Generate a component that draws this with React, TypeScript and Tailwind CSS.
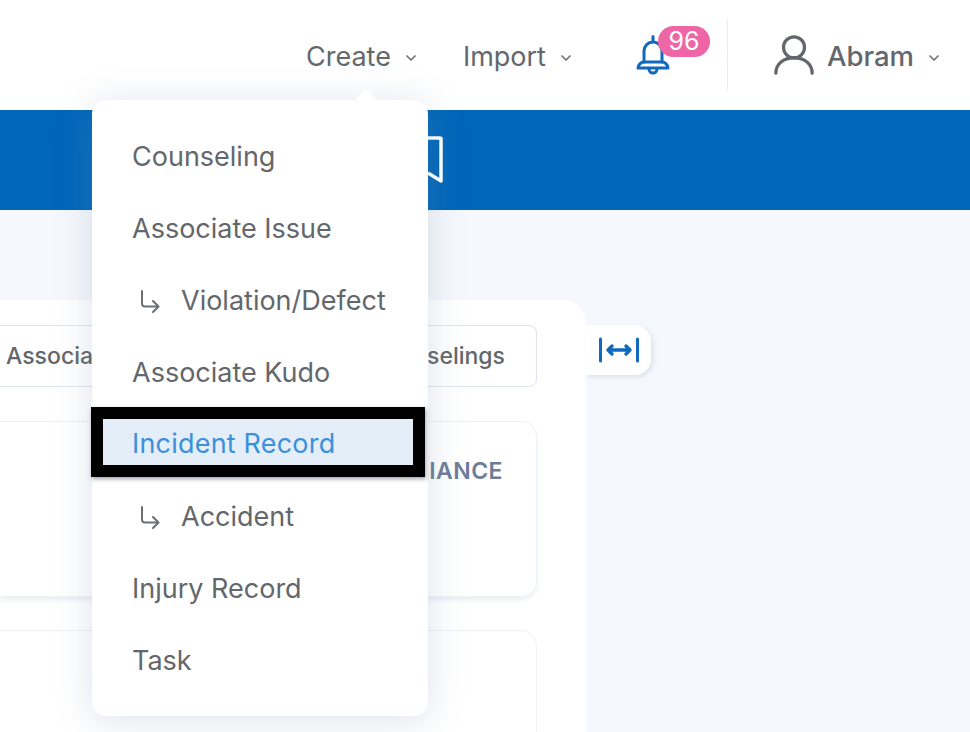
import { ChevronDown } from 'lucide-react';

const menuItems = [
  { label: 'Counseling' },
  { label: 'Associate Issue' },
  { label: 'Violation/Defect', child: true },
  { label: 'Associate Kudo' },
  { label: 'Incident Record', active: true },
  { label: 'Accident', child: true },
  { label: 'Injury Record' },
  { label: 'Task' },
];

function ChildArrow() {
  return (
    <svg width="22" height="24" viewBox="0 0 22 24" fill="none" stroke="#6b7075" strokeWidth="2" strokeLinecap="round" strokeLinejoin="round" className="mr-[20px]">
      <path d="M3 2v12.5a3 3 0 0 0 3 3h13" />
      <path d="M14 12l5.5 5.5L14 23" />
    </svg>
  );
}

function NavItem({ label }: { label: string }) {
  return (
    <div className="flex items-center gap-[12px] pt-[4px] text-[27px] text-[#63676c]">
      {label}
      <ChevronDown size={16} strokeWidth={2.5} className="mt-[2px] text-[#6b7075]" />
    </div>
  );
}

export default function App() {
  return (
    <div className="relative h-[732px] w-[970px] overflow-hidden bg-[#f5f8fc] font-['Inter',sans-serif]">
      {/* Top nav */}
      <header className="flex h-[110px] items-center justify-end bg-white pr-[28px]">
        <NavItem label="Create" />
        <div className="ml-[44px]">
          <NavItem label="Import" />
        </div>
        <div className="relative ml-[61px] h-[44px] w-[36px]">
          <svg width="36" height="42" viewBox="0 0 36 42" fill="none" stroke="#0f69bd" strokeWidth="3" strokeLinecap="round" strokeLinejoin="round" className="mt-[2px]">
            <path d="M18 1.5v4" />
            <path d="M9 27V16a9 9 0 0 1 18 0v11" />
            <path d="M3 33c0-3 3-6 6-6h18c3 0 6 3 6 6H3z" />
            <path d="M14 34a4 4 0 0 0 8 0" />
          </svg>
          <span className="absolute left-[23px] top-[-7px] flex h-[31px] w-[52px] items-center justify-center rounded-full bg-[#ee66a6] text-[25px] leading-none text-white">
            96
          </span>
        </div>
        <div className="ml-[56px] h-[72px] w-px bg-[#e6edf4]" />
        <svg width="42" height="42" viewBox="0 0 44 44" fill="none" stroke="#63676c" strokeWidth="3.4" strokeLinecap="round" className="ml-[45px]">
          <circle cx="22" cy="14" r="11" />
          <path d="M3 41c0-10 8-16 19-16s19 6 19 16" />
        </svg>
        <div className="ml-[12px]">
          <div className="flex items-center gap-[12px] pt-[4px] text-[27.5px] font-medium text-[#63676c]">
            Abram
            <ChevronDown size={16} strokeWidth={2.5} className="mt-[2px] text-[#6b7075]" />
          </div>
        </div>
      </header>

      {/* Blue bar */}
      <div className="flex h-[100px] items-center bg-[#0066b9] pl-[424px]">
        <svg width="20" height="50" viewBox="0 0 20 50" fill="none" stroke="white" strokeWidth="3.5" strokeLinejoin="round">
          <path d="M2 3h14a1 1 0 0 1 1 1v42L4 38" />
        </svg>
      </div>

      {/* Panel */}
      <div className="mt-[90px] flex items-start">
        <div className="h-[500px] w-[586px] rounded-tr-[22px] bg-white pr-[49px] pt-[25px]">
          <div className="flex h-[62px] items-center justify-between rounded-r-[8px] border border-l-0 border-[#dfe5ec] pl-[6px] pr-[31px] text-[23px] font-medium text-[#63676c]">
            <span>Associates</span>
            <span>Counselings</span>
          </div>
          <div className="mt-[34px] flex h-[176px] justify-end rounded-r-[16px] border border-l-0 border-[#eef2f7] pr-[33px] pt-[35px] shadow-[0_3px_4px_rgba(150,165,185,0.18)]">
            <span className="text-[23px] font-semibold leading-[28px] tracking-[0.02em] text-[#6c7d99]">COMPLIANCE</span>
          </div>
          <div className="mt-[33px] h-[200px] rounded-tr-[16px] border border-l-0 border-[#eef2f7] pl-[18px] pt-[92px]">
            <span className="text-[23px] font-semibold text-[#2d3748]">t</span>
          </div>
        </div>
        <div className="mt-[25px] flex h-[50px] w-[65px] items-center justify-center rounded-r-[16px] bg-white shadow-[2px_2px_4px_rgba(150,165,185,0.25)]">
          <svg width="42" height="26" viewBox="0 0 42 26" fill="none" stroke="#0f69bd" strokeWidth="3" strokeLinecap="round" strokeLinejoin="round">
            <path d="M2.5 2v22" />
            <path d="M39.5 2v22" />
            <path d="M11 13h20" strokeWidth="3.4" />
            <path d="M14 9l-4 4 4 4" strokeWidth="3.4" />
            <path d="M28 9l4 4-4 4" strokeWidth="3.4" />
          </svg>
        </div>
      </div>

      {/* Create dropdown */}
      <div className="absolute left-[92px] top-[100px] h-[616px] w-[336px] rounded-[14px] bg-white py-[21px] shadow-[0_4px_36px_rgba(120,140,170,0.26)]">
        <div className="absolute left-[266px] top-[-8px] h-[16px] w-[16px] rotate-45 rounded-[2px] bg-white" />
        {menuItems.map((item) =>
          item.active ? (
            <div key={item.label} className="relative z-10 flex h-[72px] items-center">
              <div className="mb-[6px] ml-[-1px] flex h-[70px] w-[334px] items-center border-[12px] border-black bg-[#e3eef8] pl-[29px] pt-[4px] text-[27px] tracking-[0.2px] text-[#3e8fda] shadow-[1px_2px_4px_rgba(60,70,90,0.5)]">
                {item.label}
              </div>
            </div>
          ) : (
            <div key={item.label} className="flex h-[72px] items-center pl-[40px] text-[27px] text-[#63676c]">
              {item.child && <span className="ml-[7px]"><ChildArrow /></span>}
              {item.label}
            </div>
          ),
        )}
      </div>
    </div>
  );
}
